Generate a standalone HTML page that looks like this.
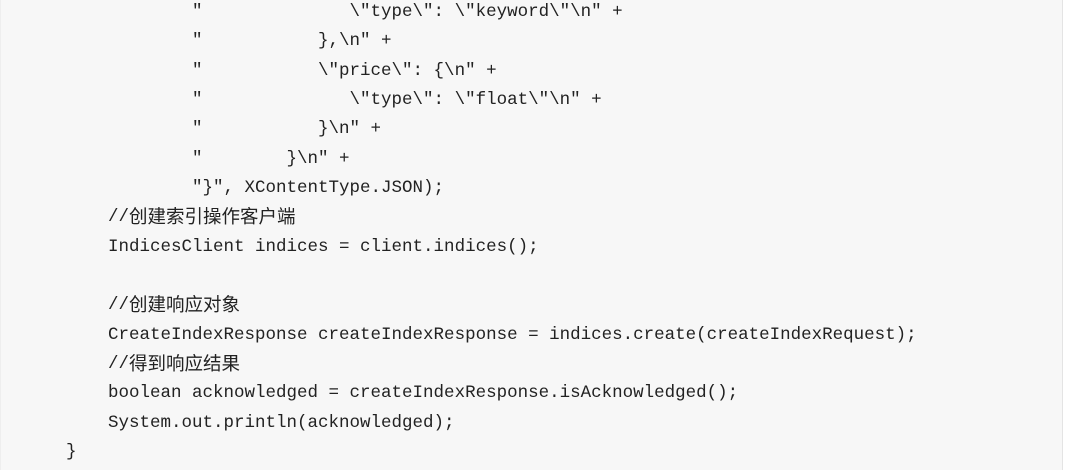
<!DOCTYPE html>
<html><head><meta charset="utf-8"><style>
html,body{margin:0;padding:0;width:1067px;height:470px;overflow:hidden;background:#fff}
.box{position:absolute;left:0;top:0;width:1061px;height:470px;background:#f7f7f7;border-right:1px solid #e4e4e4;border-left:1px solid #eee}
.code{position:absolute;left:66px;top:-2px;margin:0;font-family:"Liberation Mono",monospace;font-size:17.5px;color:#222;white-space:pre}
.code div{height:29.35px;line-height:29.35px;overflow:visible}
.c{font-family:"Noto Sans CJK SC",sans-serif;font-size:18.5px;line-height:20px;display:inline-block;vertical-align:top;margin-top:3px}
</style></head><body><div class="box"></div>
<div class="code"><div>            "              \"type\": \"keyword\"\n" +</div><div>            "           },\n" +</div><div>            "           \"price\": {\n" +</div><div>            "              \"type\": \"float\"\n" +</div><div>            "           }\n" +</div><div>            "        }\n" +</div><div>            "}", XContentType.JSON);</div><div>    //<span class="c">创建索引操作客户端</span></div><div>    IndicesClient indices = client.indices();</div><div> </div><div>    //<span class="c">创建响应对象</span></div><div>    CreateIndexResponse createIndexResponse = indices.create(createIndexRequest);</div><div>    //<span class="c">得到响应结果</span></div><div>    boolean acknowledged = createIndexResponse.isAcknowledged();</div><div>    System.out.println(acknowledged);</div><div>}</div></div>
</body></html>
